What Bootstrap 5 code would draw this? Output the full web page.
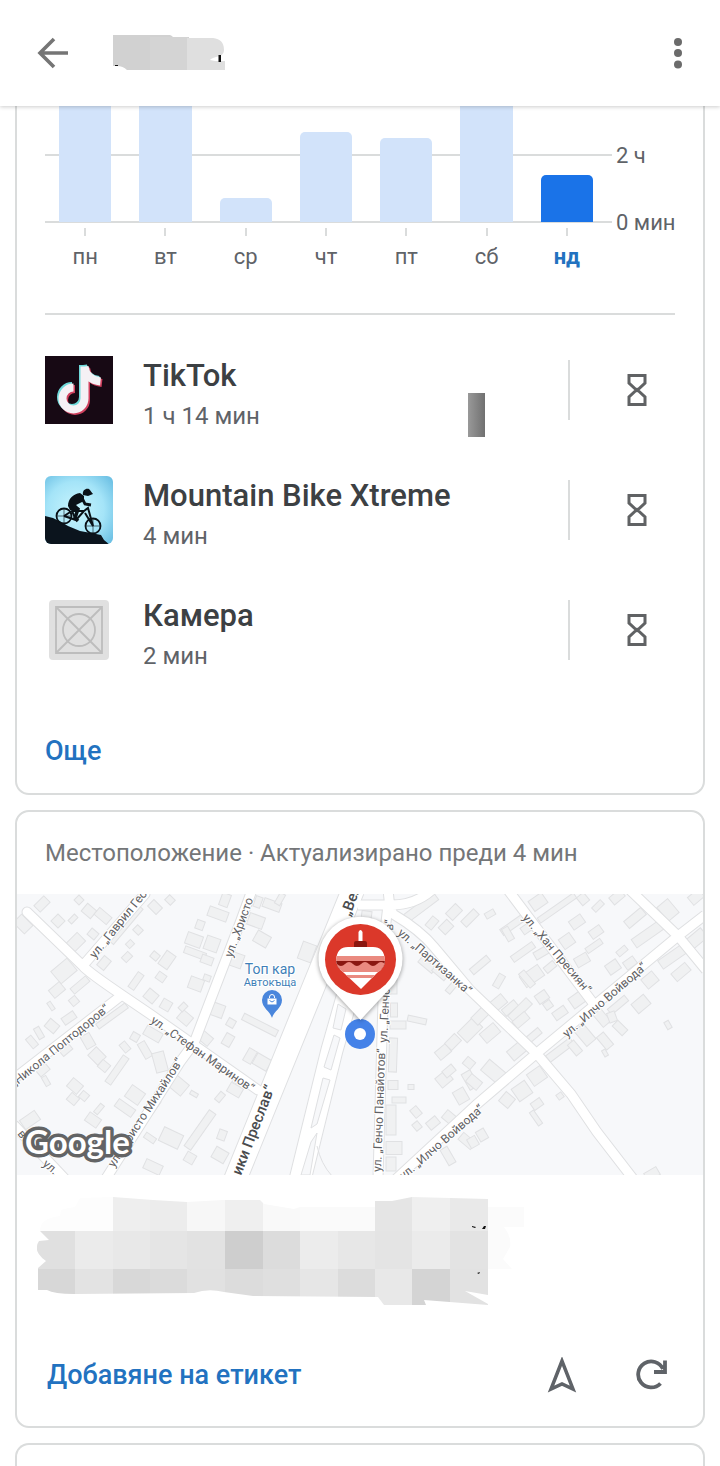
<!DOCTYPE html>
<html lang="bg">
<head>
<meta charset="utf-8">
<meta name="viewport" content="width=device-width, initial-scale=1">
<title>Family Link</title>
<link href="https://cdn.jsdelivr.net/npm/bootstrap@5.3.0/dist/css/bootstrap.min.css" rel="stylesheet">
<style>
  :root { --ink: #3c4043; --soft: #5f6368; --rule: #dadcdc; --link: #2272c0; --bar: #d2e3fa; }
  body { font-family: Roboto, "Noto Sans", sans-serif; color: var(--ink); background: #fff; }
  .screen { min-height: 100vh; overflow: hidden; }
  .topbar { height: 106px; padding: 0 13px 0 24px; background: #fff; box-shadow: 0 1px 4px rgba(0,0,0,.2); z-index: 5; }
  .icon-btn { width: 58px; height: 58px; padding: 0; border: 0; background: none; color: var(--soft); display: flex; align-items: center; justify-content: center; }
  .panel { border: 2px solid var(--rule); border-radius: 14px; margin: 0 15px 15px; background: #fff; overflow: hidden; }
  .panel-first { border-top: 0; border-radius: 0 0 14px 14px; padding: 0 28px 22px; }
  .panel-next { border-bottom: 0; border-radius: 14px 14px 0 0; min-height: 23px; margin-bottom: 0; }
  .plot { height: 117px; padding: 0 5px 1px 0; background: linear-gradient(var(--rule), var(--rule)) 0 48px / 100% 2px no-repeat, linear-gradient(var(--rule), var(--rule)) 0 115px / 100% 2px no-repeat; }
  .day-bar { width: 65%; background: var(--bar); border-radius: 5px 5px 0 0; }
  .day-bar.cut { border-radius: 0; }
  .day-bar.today { background: #1a73e8; }
  .days { padding-right: 5px; font-size: 22px; line-height: 40px; color: var(--soft); }
  .days .tick { width: 2px; height: 8px; margin: 5px auto 1px; background: var(--rule); }
  .days .today { color: var(--link); font-weight: 700; }
  .scale { width: 63px; padding: 16px 0 0 4px; font-size: 22px; line-height: 67px; color: var(--soft); white-space: nowrap; }
  .split { height: 2px; background: var(--rule); margin: 36px 0 15px; }
  .app-row { height: 120px; }
  .app-icon { width: 68px; height: 68px; margin-right: 30px; flex: none; }
  .app-text { padding-top: 13px; }
  .app-name { font-size: 31px; line-height: 40px; font-weight: 500; }
  .app-time { font-size: 24px; line-height: 41px; color: var(--soft); }
  .app-line { width: 2px; height: 60px; background: var(--rule); margin-right: 29px; flex: none; }
  .app-limit { width: 76px; flex: none; }
  .smudge { width: 17px; height: 44px; margin: 50px 83px 0 auto; background: linear-gradient(90deg, #999, #707070); }
  .action { font-size: 27px; line-height: 40px; font-weight: 500; color: var(--link); text-decoration: none; }
  .more { margin-top: 41px; }
  .place-head { font-size: 24px; line-height: 82px; padding: 0 28px; margin: 0; color: #747678; font-weight: 400; white-space: nowrap; }
  .map { display: block; width: 100%; height: auto; background: #f7f8fa; }
  .addr { display: block; width: 100%; height: auto; padding: 22px 0 0; }
  .place-foot { padding: 40px 22px 22px 30px; }
  .place-foot .icon-btn + .icon-btn { margin-left: 32px; }
  .casing { stroke: #dfe0e2; fill: none; }
  .road { stroke: #fff; fill: none; }
  .street text { font-size: 12px; fill: #5f6164; stroke: #fff; stroke-width: 2px; paint-order: stroke; }
  .street .main { font-size: 15px; font-weight: 500; fill: #4a4c4f; }
  .poi { fill: #3f7fb8; stroke: #fff; stroke-width: 2px; paint-order: stroke; text-anchor: middle; }
</style>
</head>
<body>
<div class="screen d-flex flex-column">
  <header class="topbar d-flex align-items-center position-relative">
    <button class="icon-btn" aria-label="Назад"><svg width="32" height="32" viewBox="0 0 32 32" fill="none" stroke="#757575" stroke-width="3.6"><path d="M31 16H4M17 2L3 16l14 14"/></svg></button>
    <svg class="ms-4 ps-1" width="124" height="36" viewBox="110 34 120 36" aria-hidden="true">
      <path d="M113 34h49q7-2 11 2h16v33h-62q-4-4-10-4h-4z" fill="#d1d1d1"/><path d="M150 36h38v33h-38z" fill="#d4d4d4"/>
      <path d="M187 37h26q11 1 11 12 0 4-4 6-9 2-10 4l5 1h10v9h-38z" fill="#dfdfdf"/><path d="M218.500 54h2.500v7h-2.500zM115 64h3v1h-3z" fill="#111"/>
    </svg>
    <button class="icon-btn ms-auto" aria-label="Още опции"><svg width="10" height="32" viewBox="0 0 10 32" fill="#6b6b6b"><circle cx="5" cy="5" r="4"/><circle cx="5" cy="16" r="4"/><circle cx="5" cy="27.500" r="4"/></svg></button>
  </header>

  <section class="panel panel-first">
    <div class="d-flex">
      <div class="flex-grow-1">
        <div class="plot d-flex align-items-end">
          <div class="col d-flex justify-content-center"><div class="day-bar cut" style="height:116px"></div></div>
          <div class="col d-flex justify-content-center"><div class="day-bar cut" style="height:116px"></div></div>
          <div class="col d-flex justify-content-center"><div class="day-bar" style="height:24px"></div></div>
          <div class="col d-flex justify-content-center"><div class="day-bar" style="height:90px"></div></div>
          <div class="col d-flex justify-content-center"><div class="day-bar" style="height:84px"></div></div>
          <div class="col d-flex justify-content-center"><div class="day-bar cut" style="height:116px"></div></div>
          <div class="col d-flex justify-content-center"><div class="day-bar today" style="height:47px"></div></div>
        </div>
        <div class="days d-flex text-center">
          <div class="col"><div class="tick"></div>пн</div>
          <div class="col"><div class="tick"></div>вт</div>
          <div class="col"><div class="tick"></div>ср</div>
          <div class="col"><div class="tick"></div>чт</div>
          <div class="col"><div class="tick"></div>пт</div>
          <div class="col"><div class="tick"></div>сб</div>
          <div class="col today"><div class="tick"></div>нд</div>
        </div>
      </div>
      <div class="scale"><div>2 ч</div><div>0 мин</div></div>
    </div>
    <div class="split"></div>

    <div class="app-row d-flex align-items-center">
      <svg class="app-icon" viewBox="0 0 68 68"><defs><path id="note" d="M39 10V42a11 11 0 1 1-11-11M39 10c1 9 7 14 16 15" fill="none" stroke-width="8"/></defs>
        <rect width="68" height="68" fill="#170914"/><use href="#note" x="2" y="2" stroke="#d0405e"/><use href="#note" x="-1" y="-1" stroke="#6fd9da"/><use href="#note" x=".5" y=".5" stroke="#f5f1f5"/></svg>
      <div class="app-text"><div class="app-name">TikTok</div><div class="app-time">1 ч 14 мин</div></div>
      <div class="smudge"></div>
      <div class="app-line"></div>
      <button class="icon-btn app-limit" aria-label="Лимит за TikTok"><svg width="20" height="32" viewBox="0 0 20 32" fill="none" stroke="#606264" stroke-width="3"><path id="glass" d="M2 1.500h16V9l-8 7.500L2 9zM10 15.500l8 7.500v7.500H2V23z"/></svg></button>
    </div>
    <div class="app-row d-flex align-items-center">
      <svg class="app-icon" viewBox="0 0 68 68"><defs><radialGradient id="sky" cx=".45" cy=".5" r=".7"><stop offset="0" stop-color="#c9f5fd"/><stop offset=".6" stop-color="#a4e4f8"/><stop offset="1" stop-color="#6cc0e4"/></radialGradient><clipPath id="rnd"><rect width="68" height="68" rx="6"/></clipPath></defs>
        <g clip-path="url(#rnd)"><rect width="68" height="68" fill="url(#sky)"/><path d="M0 40l8 2 8 4 7 4 12 5 11 2 10 2 3 5 6 5H0z" fill="#0b141d"/>
        <g fill="none" stroke="#0a1117"><circle cx="19" cy="40" r="7.500" stroke-width="1.800"/><circle cx="48" cy="50" r="7.500" stroke-width="1.800"/><path d="M19 40l8-5 12 0-8 9-12-4M27 35l4 9M39 35l4-3 5 18-8-13" stroke-width="2"/><path d="M19 33v14M12 40h14M48 43v14M41 50h14" stroke-width=".6"/><path d="M27 28l6 5-3 9 3 3" stroke-width="3.500"/><path d="M36 20l4 8 6 1" stroke-width="2.800"/></g>
        <path d="M23 30c0-7 5-12 12-13l4 3 0 5-8 4 2 5-8 0z" fill="#0a1117"/><path d="M38 19c-1-5 3-7 6-6 2 2 3 4 4 5l-5 2z" fill="#0a1117"/></g></svg>
      <div class="app-text"><div class="app-name">Mountain Bike Xtreme</div><div class="app-time">4 мин</div></div>
      <div class="app-line ms-auto"></div>
      <button class="icon-btn app-limit" aria-label="Лимит за Mountain Bike Xtreme"><svg width="20" height="32" viewBox="0 0 20 32" fill="none" stroke="#606264" stroke-width="3"><use href="#glass"/></svg></button>
    </div>
    <div class="app-row d-flex align-items-center">
      <svg class="app-icon" viewBox="0 0 68 68"><rect x="4" y="4" width="60" height="60" rx="4" fill="#e0e0e0"/><g fill="none" stroke="#bdbdbd" stroke-width="1.800"><path d="M11 11h46v46H11zl46 46M57 11L11 57"/><circle cx="34" cy="34" r="16"/></g></svg>
      <div class="app-text"><div class="app-name">Камера</div><div class="app-time">2 мин</div></div>
      <div class="app-line ms-auto"></div>
      <button class="icon-btn app-limit" aria-label="Лимит за Камера"><svg width="20" height="32" viewBox="0 0 20 32" fill="none" stroke="#606264" stroke-width="3"><use href="#glass"/></svg></button>
    </div>
    <a href="#" class="action more d-block">Още</a>
  </section>

  <section class="panel">
    <h2 class="place-head">Местоположение · Актуализирано преди 4 мин</h2>
    <svg class="map" viewBox="17 894 686 281" role="img" aria-label="Карта">
      <defs>
        <g id="lanes">
          <path d="M27 912L83 966Q88 972 122 995L150 1014 258 1090M86 962L145 894M122 995L15 1078M252 890L240 923 194 1043 180 1062 105 1180M15 1126L66 1180" stroke-linecap="round"/>
          <path d="M388 890L390 908 393 914Q420 930 434 947L470 990 537 1054 571 1094 597 1132 634 1180M508 890L593 1003M705 915L678 936 537 1053 477 1104 395 1180M630 890L678 936 706 970M388 905Q382 950 383 1000L378 1178M358 905H392Q415 905 432 890"/>
        </g>
        <path id="avenue" d="M353 890L311 993 235 1180"/>
        <path id="service" d="M352 980L332 1050 300 1180"/>
      </defs>
      <g id="houses" fill="#f0f1f2" stroke="#e0e1e3" stroke-width="1"></g>
      <g class="casing"><use href="#lanes" stroke-width="11"/><use href="#avenue" stroke-width="24"/><use href="#service" stroke-width="23"/></g>
      <g class="road"><use href="#lanes" stroke-width="9"/><use href="#avenue" stroke-width="22"/><use href="#service" stroke-width="21"/></g>
      <path d="M338 1004l8 5-5 21-8-2zM334 1035l6 3-9 32-7-3zM323 1078l7 2-13 44-6 4zM311 1142l6-9-7 42h-9zM317 1146q4 18 15 30" fill="#f7f8fa" stroke="#dfe0e2"/>
      <g class="street">
        <text transform="translate(95 959) rotate(-51)">ул. „Гаврил Гео</text>
        <text transform="translate(150 1022) rotate(35)">ул. „Стефан Маринов“</text>
        <text transform="translate(15 1087) rotate(-39)">„Никола Поптодоров“</text>
        <text transform="translate(114 1168) rotate(-57)">ул. „Христо Михайлов“</text>
        <text transform="translate(232 958) rotate(-70)">ул. „Христо</text>
        <text class="main" transform="translate(241 1176) rotate(-69)">ики Преслав“</text>
        <text class="main" transform="translate(350 917) rotate(-70)">„Вел</text>
        <text transform="translate(381 1172) rotate(-88)">ул. „Генчо Панайотов“</text>
        <text transform="translate(387 1043) rotate(-87)">ул. „Генчо Панайотов“</text>
        <text transform="translate(397 934) rotate(41)">ул. „Партизанка“</text>
        <text transform="translate(522 918) rotate(50)">ул. „Хан Пресиян“</text>
        <text transform="translate(567 1038) rotate(-41)">ул. „Илчо Войвода“</text>
        <text transform="translate(404 1180) rotate(-41)">ул. „Илчо Войвода“</text>
        <text transform="translate(17 1134) rotate(50)">вски“</text>
        <text transform="translate(42 1165) rotate(40)">ул.</text>
      </g>
      <text class="poi" x="270" y="974" font-size="14">Топ кар</text>
      <text class="poi" x="270" y="986" font-size="11">Автокъща</text>
      <path d="M272 1018c-2-7-10-10-10-18a10 10 0 0 1 20 0c0 8-8 11-10 18z" fill="#4a86dc"/><path d="M267.500 998.500h9v6h-9z" fill="#fff"/><path d="M269.500 998v-1a2.500 2.500 0 0 1 5 0v1" fill="none" stroke="#fff"/><path d="M269.500 1000.500q2.500 3 5 0" stroke="#4a86dc" fill="none"/>
      <circle cx="360" cy="1034" r="15" fill="#4482e8"/><circle cx="360" cy="1034" r="6" fill="#fff"/>
      <g style="filter:drop-shadow(0 1px 2px rgba(0,0,0,.4))"><path d="M360.500 1020L327 984a42 42 0 1 1 67 0z" fill="#fff"/></g>
      <circle cx="360.500" cy="959.500" r="35.500" fill="#db382a"/>
      <clipPath id="toy"><path d="M336 960q1-13 12-13h25q11 0 12 13 0 8-8 13l-16 16-17-16q-8-6-8-13z"/></clipPath>
      <path d="M358.500 942v-10q2-4 4 0v10z" fill="#fff"/><path d="M354 947v-4q0-2 2-2h9q2 0 2 2v4h-13z" fill="#8a1710"/>
      <g clip-path="url(#toy)"><path d="M330 945h60v45h-60z" fill="#fff"/><path d="M330 956h60v5h-60z" fill="#ea8a80"/><path d="M330 961h60v8h-60z" fill="#8a1710"/><path d="M330 972v-7l7-1q4 4 8 0 4-4 8 0 4 4 8 0 4-4 8 0 4 4 8 0 4-4 8 0v8z" fill="#ea8a80"/><path d="M330 975h60v3h-60z" fill="#ea8a80"/></g>
      <text x="25" y="1154" font-family="Lato, sans-serif" font-size="33" font-weight="700" fill="#fff" stroke="#636465" stroke-width="7" stroke-linejoin="round" paint-order="stroke">Google</text>
    </svg>
    <svg class="addr" viewBox="17 1197 686 109" aria-hidden="true">
      <clipPath id="scribble"><path d="M40 1231q0-13 20-15l1-6q6-2 14-3l5-9 33-1 40 3 34 2 36-2h37l4 4 30 5 6-2 75 0v-6h17l20-4 76 2v96l-23-4 23 13v1l-64-5 2 5h-42l-6-8-125-1-29-4q-16-4-30 1l-120 1q-20 0-27-4l-9 0v-22l8-7q-14-10-7-20l10-1z"/></clipPath>
      <path d="M488 1207h36v20h-20q8 10 6 20l-7 12 9 10h-24z" fill="#fbfbfb"/>
      <g clip-path="url(#scribble)" id="mosaic"></g>
      <path d="M472 1226l4 1-1 1-3-1zM482 1229l2-3h2l-1 3zM477 1273l3-1-1 2z" fill="#111"/>
    </svg>
    <div class="place-foot d-flex align-items-center">
      <a href="#" class="action me-auto">Добавяне на етикет</a>
      <button class="icon-btn" aria-label="Упътване"><svg width="30" height="36" viewBox="0 0 30 36" fill="none" stroke="#5f6368" stroke-width="3.500"><path d="M15 4L4 32l11-5 11 5z"/></svg></button>
      <button class="icon-btn" aria-label="Опресняване"><svg width="32" height="32" viewBox="0 0 32 32" fill="none" stroke="#5f6368" stroke-width="3.800"><path d="M24.500 24.500A13 13 0 1 1 27 10M29 1.500v11.500H18"/></svg></button>
    </div>
  </section>

  <section class="panel panel-next flex-grow-1"></section>
</div>
<script src="https://cdn.jsdelivr.net/npm/bootstrap@5.3.0/dist/js/bootstrap.bundle.min.js"></script>
<script>
  const NS = 'http://www.w3.org/2000/svg';
  function rect(parent, attrs) {
    const r = document.createElementNS(NS, 'rect');
    for (const k in attrs) r.setAttribute(k, attrs[k]);
    parent.appendChild(r);
  }
  // Building footprints: centre x, centre y, width, height, rotation
  const footprints = [
    [42,904,14,9,-45],[23,924,12,16,-45],[58,921,10,10,-45],[79,900,7,7,45],[89,911,12,10,40],[73,919,9,5,-45],[103,916,16,9,40],[75,943,18,12,-45],[93,934,9,8,40],[104,963,9,12,40],
    [126,925,46,6,-50],[138,930,8,7,45],[127,957,9,7,-45],[155,907,12,9,45],[170,900,8,7,45],[130,944,6,7,45],[155,956,8,7,40],[167,960,16,11,-55],[161,977,9,8,35],[136,981,18,7,-55],[151,996,12,11,40],[166,1005,10,10,30],
    [64,971,21,16,-40],[57,990,14,10,-40],[80,985,20,7,-40],[74,1001,8,8,-40],[51,1006,9,4,55],[112,1016,36,6,-36],[69,1018,14,8,-35],[52,1026,12,10,40],[39,1033,12,6,60],[32,1042,12,7,50],[88,1041,14,10,60],[66,1050,12,7,-40],[43,1070,12,8,-40],[46,1081,10,5,60],
    [97,1056,14,12,45],[104,1066,10,9,40],[117,1070,32,7,-55],[125,1047,10,7,50],[135,1037,8,8,30],[153,1034,18,10,30],[145,1050,17,8,60],[160,1062,12,20,-15],[185,1018,13,11,40],[183,1007,8,6,-45],
    [225,900,13,9,-70],[218,914,20,10,20],[200,925,8,9,20],[194,940,16,12,20],[212,944,14,14,20],[195,953,22,7,20],[207,960,12,8,20],[207,978,7,6,20],[196,984,14,12,20],[217,1010,14,13,20],[231,1023,8,8,30],[205,1038,14,10,40],[228,1040,9,12,30],[236,960,14,14,20],
    [75,1086,13,11,40],[73,1099,10,9,40],[84,1096,8,8,40],[99,1109,11,5,-50],[93,1120,14,10,35],[30,1120,18,11,-35],[125,1108,20,9,35],[135,1095,16,14,35],[150,1110,26,9,-55],[150,1138,12,6,35],[171,1138,21,15,25],[178,1085,14,18,-50],[194,1094,8,4,30],[220,1097,10,6,-50],[235,1090,14,10,30],[200,1130,44,8,-55],[222,1135,8,10,20],[220,1155,12,14,-60],[153,1167,18,10,25],[190,1158,10,10,30],
    [262,939,15,12,30],[256,921,16,12,20],[272,905,18,9,20],[258,902,7,11,20],[280,899,12,6,-60],[307,952,14,18,20],[260,1025,38,7,27],[250,1056,14,9,-60],[262,1062,12,16,-60],[238,1080,9,8,30],[366,919,10,16,8],
    [420,908,40,9,-37],[432,923,12,8,-50],[446,927,12,10,-45],[454,912,14,10,-45],[470,918,18,8,-45],[427,965,18,7,40],[440,973,16,7,40],[452,987,14,6,-50],[490,914,10,6,-30],
    [393,985,8,18,0],[394,1010,7,14,0],[398,1025,16,8,0],[393,1055,8,34,2],[393,1085,10,9,0],[399,1100,14,6,0],[391,1120,10,30,0],[394,1148,16,13,0],[391,1164,10,14,0],[417,1020,19,6,12],[411,1087,6,5,0],
    [416,1112,10,8,50],[417,1126,8,7,50],[433,1123,12,9,-40],[450,1118,14,10,40],[461,1096,12,14,-30],[444,1079,14,12,-40],[449,1071,12,8,-40],[470,1080,10,18,-30],[469,1063,10,9,40],[443,1052,14,10,-40],[453,1042,14,10,-45],[470,1030,22,14,-45],[480,1016,16,10,-45],[490,1033,18,12,-40],[448,1156,18,8,60],[467,1141,16,9,40],
    [538,902,16,12,-35],[557,908,44,6,-35],[514,924,30,7,-35],[508,934,14,7,60],[526,929,9,8,-35],[577,922,14,10,-35],[583,899,10,9,50],[598,906,12,6,-45],[567,941,13,12,-35],[596,932,13,9,-35],[594,946,18,6,-35],[582,960,14,10,-30],[523,952,26,7,-35],[541,953,14,8,-30],[550,967,12,7,-40],[532,976,22,13,-35],[527,979,18,7,50],[480,965,22,7,-40],[499,981,14,7,-60],[498,1003,16,11,-40],[510,1008,16,8,-40],[520,1010,26,9,-45],[521,1020,16,9,-40],[533,1036,18,7,-40],
    [542,997,12,10,-35],[548,1005,8,8,-35],[560,1013,14,9,-35],[577,1000,14,12,-35],[613,967,13,11,-35],[622,951,11,6,-40],[630,963,12,9,-35],[635,918,22,9,-40],[648,934,34,10,-35],[668,910,18,14,50],[617,897,14,9,-40],[696,897,14,10,-40],[672,957,28,10,-35],[681,972,18,10,-40],[650,980,14,12,-40],[641,1004,16,12,-40],[618,1005,22,7,-40],[602,1018,10,16,-40],[612,1017,8,10,-20],[620,1028,14,8,45],[585,1035,12,20,-40],[605,1041,9,16,-40],[605,1053,4,7,-30],[668,1025,5,8,-30],[560,1050,30,8,-37],[575,1048,8,14,-40],[518,1050,20,12,-40],
    [537,1076,16,14,-35],[522,1091,16,15,-35],[507,1100,12,12,40],[537,1104,11,8,-35],[536,1118,16,5,55],[560,1096,6,6,-35],[495,1073,26,14,40],[474,1082,14,10,40],[482,1135,9,11,-30],[473,1142,9,10,-30],[652,1174,14,9,-30],[695,940,24,12,-40]
  ];
  const houses = document.getElementById('houses');
  for (const [x, y, w, h, a] of footprints)
    rect(houses, { x: x - w / 2, y: y - h / 2, width: w, height: h, transform: `rotate(${a} ${x} ${y})` });

  // Grey levels of the covered address, row by row
  const cols = [37, 75, 113, 150, 187, 225, 263, 300, 338, 375, 412, 450, 488];
  const rows = [1197, 1231, 1269, 1307];
  const greys = [
    ['fd','fd','ee','ec','f7','ef','f9','fa','fa','e5','ef','e9'],
    ['e0','eb','e8','e5','e2','ce','dc','ec','e7','e4','eb','e3'],
    ['d7','e3','d8','db','e1','dc','df','e6','dc','e8','d4','e2']
  ];
  const mosaic = document.getElementById('mosaic');
  greys.forEach((line, r) => line.forEach((g, c) =>
    rect(mosaic, { x: cols[c], y: rows[r], width: cols[c + 1] - cols[c], height: rows[r + 1] - rows[r], fill: '#' + g + g + g })));
</script>
</body>
</html>
